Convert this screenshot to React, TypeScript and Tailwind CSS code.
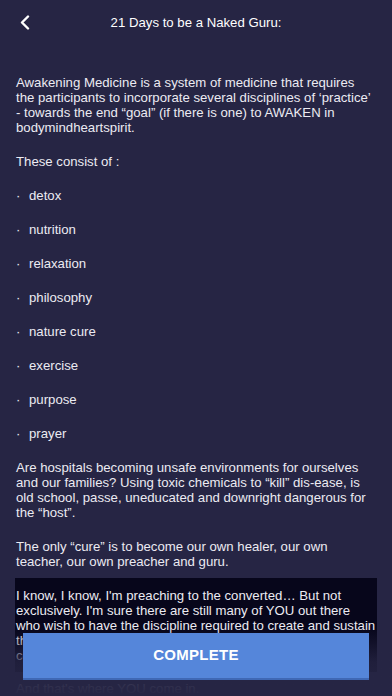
import React from "react";

const items = [
  "detox",
  "nutrition",
  "relaxation",
  "philosophy",
  "nature cure",
  "exercise",
  "purpose",
  "prayer",
];

export default function App() {
  return (
    <div
      className="relative h-[696px] w-full overflow-hidden bg-[#262544] text-[#ecebf2]"
      style={{ fontFamily: '"Liberation Sans", Arial, sans-serif' }}
    >
      <div className="relative flex h-[44px] items-center justify-center">
        <svg
          className="absolute left-[19px] top-[15px]"
          width="12"
          height="15"
          viewBox="0 0 12 15"
          fill="none"
        >
          <path
            d="M9 1.5 L3 7.5 L9 13.5"
            stroke="#ffffff"
            strokeWidth="2.4"
            strokeLinecap="round"
            strokeLinejoin="round"
          />
        </svg>
        <span className="text-[13.2px] leading-[15px] text-white">
          21 Days to be a Naked Guru:
        </span>
      </div>

      <div className="flex flex-col gap-[19px] px-[16px] pt-[31px] text-[13.2px] leading-[15px]">
        <p>
          Awakening Medicine is a system of medicine that requires the
          participants to incorporate several disciplines of ‘practice’ -
          towards the end “goal” (if there is one) to AWAKEN in
          bodymindheartspirit.
        </p>
        <p>These consist of :</p>
        {items.map((it) => (
          <div key={it} className="flex">
            <span className="w-[13px] pl-[0px]">·</span>
            <span>{it}</span>
          </div>
        ))}
        <p>
          Are hospitals becoming unsafe environments for ourselves and our
          families? Using toxic chemicals to “kill” dis-ease, is old school,
          passe, uneducated and downright dangerous for the “host”.
        </p>
        <div className="flex flex-col">
          <p>
            The only “cure” is to become our own healer, our own teacher, our
            own preacher and guru.
          </p>
          <div className="-mx-[1px] mt-[9px] bg-[#07061b] px-[1px] pb-[9px] pt-[10px]">
            <p>
              I know, I know, I'm preaching to the converted… But not
              exclusively. I'm sure there are still many of YOU out there who
              wish to have the discipline required to create and sustain the
              change they wish to see in their lives, but who need a coach to
              help them get there.
            </p>
          </div>
          <p className="mt-[9px]">And that's where YOU come in.</p>
        </div>
      </div>

      <div className="pointer-events-none absolute bottom-0 left-0 right-0 h-[68px] bg-linear-to-b from-[#262544]/0 via-[#262544]/80 to-[#262544]" />

      <button className="absolute bottom-[16px] left-[23px] right-[23px] h-[47px] border-b-2 border-[#3f68b5] bg-[#5586da] text-[15px] font-bold tracking-[0.3px] text-white">
        COMPLETE
      </button>
    </div>
  );
}
